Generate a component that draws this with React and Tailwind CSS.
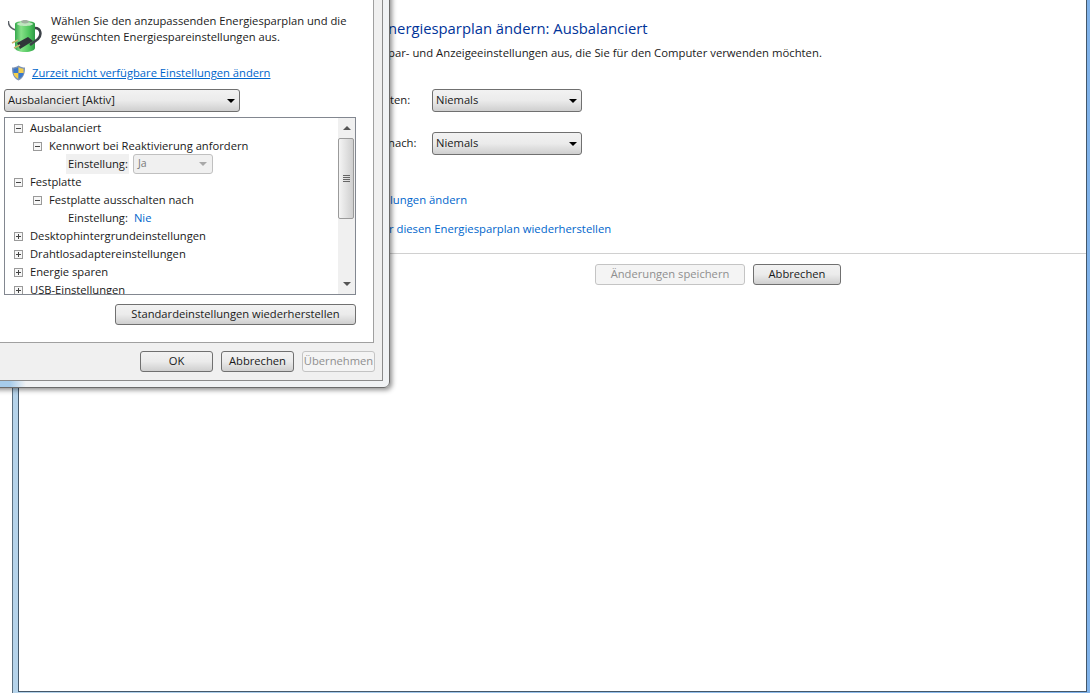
const font = "font-['Open_Sans','Liberation_Sans',sans-serif]";

function Select({ className = "", label }) {
  return (
    <div className={`flex items-center justify-between rounded-[3px] border border-[#707070] bg-gradient-to-b from-[#f2f2f2] via-[#ebebeb] to-[#cfcfcf] pl-[3px] pr-[4px] text-[11.2px] text-[#1a1a1a] ${className}`}>
      <span>{label}</span>
      <span className="h-0 w-0 border-x-[4px] border-t-[4px] border-x-transparent border-t-black" />
    </div>
  );
}

function Button({ label, disabled, className = "" }) {
  const look = disabled
    ? "border-[#c4c4c4] bg-[#f4f4f4] text-[#8f8f8f]"
    : "border-[#707070] bg-gradient-to-b from-[#f2f2f2] via-[#ebebeb] to-[#cfcfcf] text-[#1a1a1a]";
  return (
    <div className={`flex items-center justify-center rounded-[3px] border text-[11.2px] ${look} ${className}`}>
      {label}
    </div>
  );
}

function TreeBox({ open }) {
  return (
    <svg width="9" height="9" viewBox="0 0 9 9" className="shrink-0">
      <rect x="0.5" y="0.5" width="8" height="8" fill="#f7f7f7" stroke="#9a9a9a" />
      <path d="M2 4.500h5" stroke="#444" />
      {!open && <path d="M4.500 2v5" stroke="#444" />}
    </svg>
  );
}

function TreeRow({ depth = 0, open, label }) {
  const indent = depth === 1 ? "pl-[28px]" : "pl-[9px]";
  return (
    <div className={`flex h-[18px] items-center gap-[7px] text-[11.2px] text-[#1a1a1a] ${indent}`}>
      <TreeBox open={open} />
      <span>{label}</span>
    </div>
  );
}

function BatteryIcon() {
  return (
    <svg width="34" height="36" viewBox="0 0 34 36" className="shrink-0">
      <defs>
        <linearGradient id="cell" x1="0" x2="1" y1="0" y2="0">
          <stop offset="0" stopColor="#35a84c" />
          <stop offset="0.3" stopColor="#86e088" />
          <stop offset="0.7" stopColor="#4fc65e" />
          <stop offset="1" stopColor="#2f9a46" />
        </linearGradient>
      </defs>
      <path d="M0.500 3c-.5 4 2 7 7 9" fill="none" stroke="#5a6066" strokeWidth="1.500" />
      <path d="M7 6c0-2 4-3 10-3s10 1 10 3v24c0 2-4 4-10 4s-10-2-10-4z" fill="url(#cell)" />
      <path d="M9 6c0-1 4-2 8-2s8 1 8 2-4 2-8 2-8-1-8-2z" fill="#bfe6bf" />
      <path d="M13 3.500c0-1 2-1.500 4-1.500s4 .5 4 1.500-2 2-4 2-4-1-4-2z" fill="#9fb09f" />
      <path d="M27 10c6 0 7 7 3 11l-8 6" fill="none" stroke="#3c4248" strokeWidth="2.500" />
      <path d="M9 25l11-6 5 4-13 8z" fill="#2f3438" />
      <path d="M4 25l6-3M6 30l6-3" stroke="#c9b26b" strokeWidth="1.500" />
    </svg>
  );
}

function ShieldIcon() {
  return (
    <svg width="15" height="16" viewBox="0 0 15 16" className="shrink-0">
      <path d="M7.500 0.500C5.500 2 3 2.500 1 2.500c0 6 1 10.500 6.500 13 5.500-2.500 6.500-7 6.500-13-2 0-4.500-.5-6.500-2z" fill="#7d93b5" />
      <path d="M7.500 2C6 3 4.500 3.500 2.500 3.700V8h5z" fill="#3b78c9" />
      <path d="M7.500 2c1.500 1 3 1.500 5 1.700V8h-5z" fill="#f3cf4b" />
      <path d="M2.500 8h5v6C4.500 12.500 3 11 2.500 8z" fill="#f3cf4b" />
      <path d="M12.500 8h-5v6c3-1.500 4.500-3 5-6z" fill="#3b78c9" />
    </svg>
  );
}

function Scrollbar() {
  return (
    <div className="absolute inset-y-0 right-0 flex w-[17px] flex-col items-center justify-between bg-[#f0f0f0] py-[8px]">
      <span className="h-0 w-0 border-x-[4px] border-b-[4px] border-x-transparent border-b-[#555]" />
      <span className="h-0 w-0 border-x-[4px] border-t-[4px] border-x-transparent border-t-[#555]" />
      <div className="absolute left-0 top-[20px] flex h-[81px] w-[16px] flex-col items-center justify-center gap-[1px] rounded-[2px] border border-[#9a9a9a] bg-gradient-to-r from-[#f4f4f4] to-[#cfcfcf]">
        <span className="h-px w-[7px] bg-[#666]" />
        <span className="h-px w-[7px] bg-[#666]" />
        <span className="h-px w-[7px] bg-[#666]" />
        <span className="h-px w-[7px] bg-[#666]" />
      </div>
    </div>
  );
}

function Dialog() {
  return (
    <div className="absolute left-[-20px] top-[-20px] h-[408px] w-[410px] rounded-[6px] border border-[#6b6b6b] bg-gradient-to-r from-[#a6cceb] from-[7%] to-[#f0f2f4] to-[11%] pb-[6px] pl-[7px] pr-[6px] pt-[7px] shadow-[2px_2px_5px_rgba(0,0,0,0.45)]">
      <div className="h-full border border-[#8a8a8a] bg-[#f0f0f0]">
        <div className="mr-[8px] h-[354px] border border-[#a0a0a0] bg-white pl-[14px] pt-[23px]">
          <div className="flex h-[32px] items-start gap-[9px] pl-[4px]">
            <div className="pt-[5px]">
              <BatteryIcon />
            </div>
            <p className="text-[11.2px] leading-[16px] text-[#1a1a1a]">
              Wählen Sie den anzupassenden Energiesparplan und die
              <br />
              gewünschten Energiespareinstellungen aus.
            </p>
          </div>
          <div className="mt-[20px] flex items-center gap-[6px] pl-[7px]">
            <ShieldIcon />
            <span className="text-[11.2px] leading-[16px] text-[#0066cc] underline">Zurzeit nicht verfügbare Einstellungen ändern</span>
          </div>
          <Select label="Ausbalanciert [Aktiv]" className="mt-[8px] h-[23px] w-[236px]" />
          <div className="relative mt-[5px] h-[178px] w-[352px] overflow-hidden border border-[#828790] bg-white pt-[1px]">
            <TreeRow open label="Ausbalanciert" />
            <TreeRow depth={1} open label="Kennwort bei Reaktivierung anfordern" />
            <div className="flex h-[18px] items-center pl-[61px] text-[11.2px] text-[#1a1a1a]">
              <span className="flex h-[20px] shrink-0 items-center bg-[#f0f0f0] pl-[2px] pr-[1px]">Einstellung:</span>
              <div className="ml-[4px] flex h-[20px] w-[80px] shrink-0 items-center justify-between rounded-[3px] border border-[#c0c0c0] bg-[#f0f0f0] pl-[4px] pr-[5px] text-[10.500px] text-[#7a7a7a]">
                <span>Ja</span>
                <span className="h-0 w-0 border-x-[4px] border-t-[4px] border-x-transparent border-t-[#a8a8a8]" />
              </div>
            </div>
            <TreeRow open label="Festplatte" />
            <TreeRow depth={1} open label="Festplatte ausschalten nach" />
            <div className="flex h-[18px] items-center pl-[63px] text-[11.2px] text-[#1a1a1a]">
              <span>Einstellung:</span>
              <span className="ml-[6px] text-[#0066cc]">Nie</span>
            </div>
            <TreeRow label="Desktophintergrundeinstellungen" />
            <TreeRow label="Drahtlosadaptereinstellungen" />
            <TreeRow label="Energie sparen" />
            <TreeRow label="USB-Einstellungen" />
            <Scrollbar />
          </div>
          <div className="mt-[9px] flex w-[352px] justify-end">
            <Button label="Standardeinstellungen wiederherstellen" className="h-[21px] w-[241px]" />
          </div>
        </div>
        <div className="mt-[8px] flex gap-[8px] pl-[151px]">
          <Button label="OK" className="h-[21px] w-[73px]" />
          <Button label="Abbrechen" className="h-[21px] w-[73px]" />
          <Button label="Übernehmen" disabled className="h-[21px] w-[73px]" />
        </div>
      </div>
    </div>
  );
}

function PowerWindow() {
  return (
    <div className="absolute left-[12px] top-[-20px] h-[713px] w-[1090px] border-l border-[#5a6f80] bg-gradient-to-r from-[#b5d3ea] to-[#7fb2ea] pb-[1px] pl-[5px] pr-[15px]">
      <div className="h-full border border-[#44586a] bg-white pl-[364px] pt-[36px] text-[11.3px] text-[#1a1a1a]">
        <h1 className="pl-[5px] text-[14.8px] font-normal leading-[22px] text-[#003399]">nergiesparplan ändern: Ausbalanciert</h1>
        <p className="mt-[6px] pl-[5px] leading-[16px]">par- und Anzeigeeinstellungen aus, die Sie für den Computer verwenden möchten.</p>
        <div className="mt-[28px] flex h-[23px] items-center">
          <span className="w-[49px] pl-[7px]">ten:</span>
          <Select label="Niemals" className="h-[23px] w-[150px]" />
        </div>
        <div className="mt-[20px] flex h-[23px] items-center">
          <span className="w-[49px] pl-[5px]">nach:</span>
          <Select label="Niemals" className="h-[23px] w-[150px]" />
        </div>
        <p className="mt-[37px] pl-[7px] leading-[16px] text-[#0066cc]">lungen ändern</p>
        <p className="-ml-[1px] mt-[13px] leading-[16px] text-[#0066cc]">ür diesen Energiesparplan wiederherstellen</p>
        <div className="mt-[16px] border-t border-[#d0d0d0] pt-[10px]">
          <div className="flex gap-[8px] pl-[212px]">
            <Button label="Änderungen speichern" disabled className="h-[21px] w-[150px]" />
            <Button label="Abbrechen" className="h-[21px] w-[88px]" />
          </div>
        </div>
      </div>
    </div>
  );
}

export default function App() {
  return (
    <div className={`relative h-[693px] w-[1090px] overflow-hidden bg-white ${font}`}>
      <PowerWindow />
      <Dialog />
    </div>
  );
}
